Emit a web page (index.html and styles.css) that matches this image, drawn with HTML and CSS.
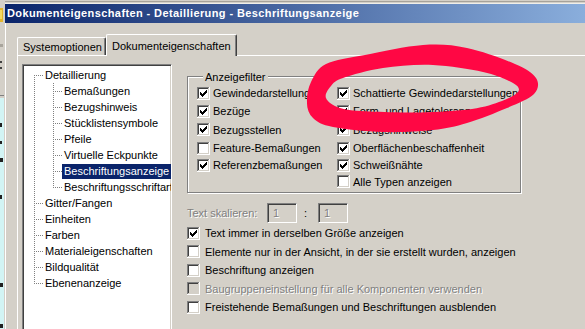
FILE: index.html
```html
<!DOCTYPE html>
<html lang="de">
<head>
<meta charset="utf-8">
<title>Dokumenteigenschaften - Detaillierung - Beschriftungsanzeige</title>
<link rel="stylesheet" href="styles.css">
</head>
<body>
<svg class="defs" width="0" height="0" aria-hidden="true">
  <defs>
    <symbol id="cb" viewBox="0 0 13 13">
      <rect x="0" y="0" width="13" height="13" fill="#fff"/>
      <path d="M0 0h12v1H1v11H0z" fill="#808080"/>
      <path d="M1 1h10v1H2v9H1z" fill="#404040"/>
      <path d="M12 0h1v13H0v-1h12z" fill="#fff"/>
      <path d="M11 1h1v11H1v-1h10z" fill="#d4d0c8"/>
    </symbol>
    <symbol id="cbc" viewBox="0 0 13 13">
      <rect x="0" y="0" width="13" height="13" fill="#fff"/>
      <path d="M0 0h12v1H1v11H0z" fill="#808080"/>
      <path d="M1 1h10v1H2v9H1z" fill="#404040"/>
      <path d="M12 0h1v13H0v-1h12z" fill="#fff"/>
      <path d="M11 1h1v11H1v-1h10z" fill="#d4d0c8"/>
      <path d="M3 5h1v3H3zM4 6h1v3H4zM5 7h1v3H5zM6 6h1v3H6zM7 5h1v3H7zM8 4h1v3H8zM9 3h1v3H9z" fill="#000"/>
    </symbol>
    <symbol id="cbd" viewBox="0 0 13 13">
      <rect x="0" y="0" width="13" height="13" fill="#d4d0c8"/>
      <path d="M0 0h12v1H1v11H0z" fill="#808080"/>
      <path d="M1 1h10v1H2v9H1z" fill="#404040"/>
      <path d="M12 0h1v13H0v-1h12z" fill="#fff"/>
      <path d="M11 1h1v11H1v-1h10z" fill="#d4d0c8"/>
    </symbol>
  </defs>
</svg>

<div class="screen">
  <svg class="behind" width="5" height="329" viewBox="0 0 5 329" aria-hidden="true">
    <rect x="0" y="0" width="5" height="329" fill="#d4d0c8"/>
    <rect x="0" y="8" width="3" height="14" fill="#e2b42a"/>
    <rect x="0" y="10" width="2" height="9" fill="#f6d860"/>
    <rect x="0" y="44" width="3" height="3" fill="#a8a49c"/>
    <rect x="0" y="61" width="2" height="2" fill="#404040"/>
    <rect x="0" y="67" width="2" height="2" fill="#404040"/>
    <rect x="0" y="95" width="4" height="1" fill="#808080"/>
    <rect x="0" y="98" width="4" height="231" fill="#d2f4f4"/>
    <rect x="0" y="123" width="2" height="4" fill="#202020"/>
    <rect x="0" y="141" width="2" height="3" fill="#202020"/>
    <rect x="0" y="158" width="3" height="4" fill="#202020"/>
    <rect x="0" y="195" width="2" height="4" fill="#202020"/>
    <rect x="0" y="283" width="3" height="4" fill="#202020"/>
    <rect x="0" y="324" width="3" height="4" fill="#202020"/>
  </svg>

  <div class="dialog">
    <div class="topline"></div>
    <div class="titlebar">Dokumenteigenschaften - Detaillierung - Beschriftungsanzeige</div>
    <div class="client">
      <div class="tabs">
        <div class="tab tab-sys">Systemoptionen</div>
        <div class="tab tab-doc">Dokumenteigenschaften</div>
      </div>
      <div class="panel">
        <div class="tree">
          <div class="row r0 first"><span>Detaillierung</span></div>
          <div class="row c"><span>Bemaßungen</span></div>
          <div class="row c"><span>Bezugshinweis</span></div>
          <div class="row c"><span>Stücklistensymbole</span></div>
          <div class="row c"><span>Pfeile</span></div>
          <div class="row c"><span>Virtuelle Eckpunkte</span></div>
          <div class="row c"><span class="sel">Beschriftungsanzeige</span></div>
          <div class="row c lastc"><span>Beschriftungsschriftarten</span></div>
          <div class="row r0"><span>Gitter/Fangen</span></div>
          <div class="row r0"><span>Einheiten</span></div>
          <div class="row r0"><span>Farben</span></div>
          <div class="row r0"><span>Materialeigenschaften</span></div>
          <div class="row r0"><span>Bildqualität</span></div>
          <div class="row r0 last"><span>Ebenenanzeige</span></div>
        </div>

        <div class="settings">
          <div class="group">
            <div class="group-label">Anzeigefilter</div>
            <div class="grid">
              <div class="ck"><svg width="13" height="13"><use href="#cbc"/></svg><span>Gewindedarstellungen</span></div>
              <div class="ck"><svg width="13" height="13"><use href="#cbc"/></svg><span>Schattierte Gewindedarstellungen</span></div>
              <div class="ck"><svg width="13" height="13"><use href="#cbc"/></svg><span>Bezüge</span></div>
              <div class="ck"><svg width="13" height="13"><use href="#cbc"/></svg><span>Form- und Lagetoleranzen</span></div>
              <div class="ck"><svg width="13" height="13"><use href="#cbc"/></svg><span>Bezugsstellen</span></div>
              <div class="ck"><svg width="13" height="13"><use href="#cbc"/></svg><span>Bezugshinweise</span></div>
              <div class="ck"><svg width="13" height="13"><use href="#cb"/></svg><span>Feature-Bemaßungen</span></div>
              <div class="ck"><svg width="13" height="13"><use href="#cbc"/></svg><span>Oberflächenbeschaffenheit</span></div>
              <div class="ck"><svg width="13" height="13"><use href="#cbc"/></svg><span>Referenzbemaßungen</span></div>
              <div class="ck"><svg width="13" height="13"><use href="#cbc"/></svg><span>Schweißnähte</span></div>
              <div class="ck col2"><svg width="13" height="13"><use href="#cb"/></svg><span>Alle Typen anzeigen</span></div>
            </div>
          </div>

          <div class="scale">
            <span class="scale-label disabled">Text skalieren:</span>
            <span class="edit disabled">1</span>
            <span class="colon">:</span>
            <span class="edit disabled">1</span>
          </div>

          <div class="options">
            <div class="ck opt"><svg width="13" height="13"><use href="#cbc"/></svg><span>Text immer in derselben Größe anzeigen</span></div>
            <div class="ck opt"><svg width="13" height="13"><use href="#cb"/></svg><span>Elemente nur in der Ansicht, in der sie erstellt wurden, anzeigen</span></div>
            <div class="ck opt"><svg width="13" height="13"><use href="#cb"/></svg><span>Beschriftung anzeigen</span></div>
            <div class="ck opt"><svg width="13" height="13"><use href="#cbd"/></svg><span class="disabled">Baugruppeneinstellung für alle Komponenten verwenden</span></div>
            <div class="ck opt"><svg width="13" height="13"><use href="#cb"/></svg><span>Freistehende Bemaßungen und Beschriftungen ausblenden</span></div>
          </div>
        </div>
      </div>
    </div>
  </div>
</div>

<svg class="marker" width="585" height="329" viewBox="0 0 585 329" aria-hidden="true">
  <path fill="#ff0744" fill-rule="evenodd" d="M307 102 C306.7 96 307.8 88.3 311 82 C314.2 75.7 317 68.5 326 64 C335 59.5 348.8 58.2 365 55 C381.2 51.8 406 46.2 423 45 C440 43.8 451.7 44.8 467 48 C482.3 51.2 503.5 59 515 64 C526.5 69 532.8 73 536 78 C539.2 83 538.8 89 534 94 C529.2 99 518.2 103.2 507 108 C495.8 112.8 479.3 119.3 467 123 C454.7 126.7 447 128.5 433 130 C419 131.5 399.7 132.5 383 132 C366.3 131.5 344.7 129.3 333 127 C321.3 124.7 317.3 122.2 313 118 C308.7 113.8 306.7 108 307 102 Z M326 98 C324.5 94.3 328.2 89.3 331 86 C333.8 82.7 334.3 81 343 78 C351.7 75 368 70.2 383 68 C398 65.8 416.3 64.3 433 65 C449.7 65.7 469.7 69 483 72 C496.3 75 507.2 79.7 513 83 C518.8 86.3 520.2 89.2 518 92 C515.8 94.8 509 98.3 502 101 C494 104 485 107 472 109 C458.7 110.8 437 112.2 420 112.5 C403.3 112.8 383.3 112 370 111.5 C356.7 111 347.3 110.2 340 108 C332.7 105.8 327.5 101.7 326 98 Z"/>
</svg>
</body>
</html>
```

FILE: styles.css
```css
* { box-sizing: border-box; }

html, body { margin: 0; padding: 0; }

body {
  width: 585px;
  height: 329px;
  overflow: hidden;
  position: relative;
  background: #d4d0c8;
  font: 11px "Liberation Sans", Arial, sans-serif;
  color: #000;
}

.defs { position: absolute; width: 0; height: 0; overflow: hidden; }

.screen { display: flex; height: 329px; overflow: hidden; }

.behind { flex: none; display: block; }

.dialog {
  flex: 1;
  min-width: 0;
  display: flex;
  flex-direction: column;
  overflow: hidden;
}

.topline {
  flex: none;
  height: 4px;
  background: linear-gradient(#d4d0c8 0 1px, #a6a29a 1px 2px, #d4d0c8 2px 3px, #f0eee8 3px 4px);
}

.titlebar {
  flex: none;
  height: 19px;
  line-height: 19px;
  padding-left: 2px;
  background: linear-gradient(to right, #0a246a, #8aaedc);
  color: #fff;
  font-weight: bold;
  letter-spacing: 0.4px;
  white-space: nowrap;
}

.client {
  flex: none;
  display: flex;
  flex-direction: column;
  border-left: 1px solid #fff;
  padding: 11px 0 0 11px;
}

.tabs {
  flex: none;
  display: flex;
  align-items: flex-end;
  height: 21px;
}

.tab {
  flex: none;
  height: 18px;
  display: flex;
  align-items: center;
  padding-left: 5px;
  border: 1px solid #fff;
  border-bottom: 0;
  border-right-color: #404040;
  box-shadow: inset -1px 0 #808080;
  border-radius: 2px 2px 0 0;
  white-space: nowrap;
}

.tab-sys { width: 89px; }

.tab-doc {
  width: 131px;
  height: 22px;
  margin-bottom: -1px;
  position: relative;
  z-index: 1;
  background: #d4d0c8;
}

.panel {
  flex: none;
  display: flex;
  align-items: flex-start;
  border-top: 1px solid #fff;
  border-left: 1px solid #fff;
  padding: 8px 0 0 4px;
}

/* tree view */
.tree {
  --vd: repeating-linear-gradient(to bottom, #808080 0 1px, transparent 1px 2px);
  --hd: repeating-linear-gradient(to right, #808080 0 1px, transparent 1px 2px);
  flex: none;
  width: 150px;
  height: 300px;
  overflow: hidden;
  background: #fff;
  border: 1px solid;
  border-color: #808080 #fff #fff #808080;
  box-shadow: inset 1px 1px #404040, inset -1px -1px #d4d0c8;
  padding: 2px 0 0 1px;
}

.row {
  height: 16px;
  display: flex;
  align-items: center;
  white-space: nowrap;
  background-repeat: no-repeat;
}

.row span {
  display: inline-block;
  height: 15px;
  line-height: 15px;
  padding: 0 2px;
}

.r0 span { margin-left: 19px; }
.c span { margin-left: 38px; }

.r0 {
  background-image: var(--hd), var(--vd);
  background-size: 9px 1px, 1px 16px;
  background-position: 10px 8px, 10px 0;
}
.r0.first {
  background-size: 9px 1px, 1px 8px;
  background-position: 10px 8px, 10px 8px;
}
.r0.last {
  background-size: 9px 1px, 1px 9px;
  background-position: 10px 8px, 10px 0;
}

.c {
  background-image: var(--hd), var(--vd), var(--vd);
  background-size: 9px 1px, 1px 16px, 1px 16px;
  background-position: 29px 8px, 29px 0, 10px 0;
}
.c.lastc {
  background-size: 9px 1px, 1px 9px, 1px 16px;
}

.sel { background: #0a246a; color: #fff; }

/* settings */
.settings {
  flex: none;
  margin: 12px 0 0 15px;
}

.group {
  width: 334px;
  border: 1px solid #808080;
  box-shadow: inset 1px 1px #fff, 1px 1px #fff;
  padding: 0 0 2px 9px;
}

.group-label {
  width: fit-content;
  margin: -6px 0 0 6px;
  padding: 0 2px;
  line-height: 13px;
  background: #d4d0c8;
}

.grid {
  display: grid;
  grid-template-columns: 140px 1fr;
  grid-template-rows: 18px 18px 19px 18px 16px 17px;
}

.ck {
  display: flex;
  align-items: center;
  gap: 3px;
  white-space: nowrap;
  min-width: 0;
}

.ck svg { flex: none; display: block; }

.col2 { grid-column: 2; }

.scale {
  display: flex;
  align-items: center;
  height: 20px;
  margin-top: 10px;
}

.scale-label { width: 80px; }

.edit {
  width: 30px;
  height: 20px;
  line-height: 18px;
  padding-left: 5px;
  border: 1px solid;
  border-color: #808080 #fff #fff #808080;
  box-shadow: inset 1px 1px #404040, inset -1px -1px #d4d0c8;
}

.colon {
  width: 21px;
  padding-left: 7px;
}

.disabled {
  color: #808080;
  text-shadow: 1px 1px 0 #fff;
}

.options { margin-top: 1px; }

.opt {
  height: 18.5px;
  gap: 5px;
}

.marker {
  position: absolute;
  left: 0;
  top: 0;
  pointer-events: none;
}
```
